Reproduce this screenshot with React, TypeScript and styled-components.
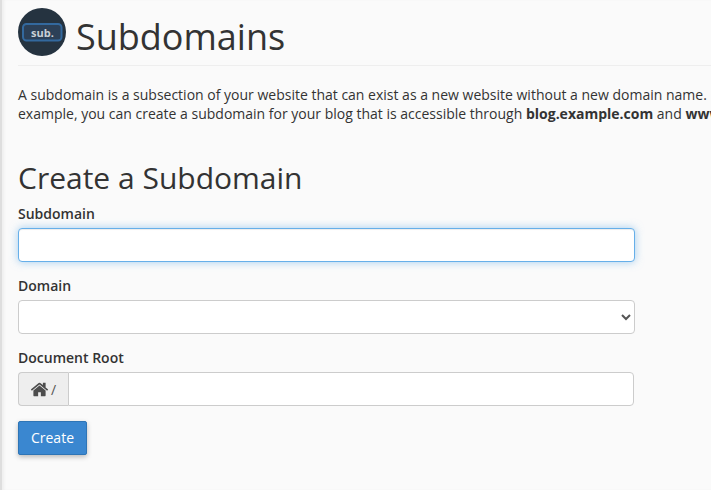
import React from "react";
import styled, { createGlobalStyle } from "styled-components";

const GlobalStyle = createGlobalStyle`
  html, body {
    margin: 0;
    padding: 0;
    height: 100%;
    overflow: hidden;
    background-color: #fafafa;
  }
  #root {
    height: 100%;
  }
`;

const Page = styled.div`
  box-sizing: border-box;
  width: 711px;
  height: 490px;
  overflow: hidden;
  padding: 8px 0 0 16px;
  background-color: #fafafa;
  color: #333;
  font-family: "Open Sans", sans-serif;
  font-size: 14px;
  border-left: 2px solid #dedede;
  box-shadow: inset 3px 0 3px -1px #eeeeee;
`;

const Header = styled.div`
  display: flex;
  align-items: center;
  width: 760px;
  height: 48px;
  padding-bottom: 9px;
  border-bottom: 1px solid #eee;
`;

const Logo = styled.svg`
  width: 48px;
  height: 48px;
  flex: none;
`;

const Title = styled.h1`
  margin: 10px 0 0 10px;
  font-size: 36px;
  font-weight: 400;
  line-height: 48px;
  color: #333;
`;

const Intro = styled.p`
  margin: 19px 0 0;
  line-height: 19px;
  font-size: 14px;
  white-space: nowrap;
`;

const SectionTitle = styled.h2`
  margin: 37px 0 0;
  font-size: 30px;
  font-weight: 400;
  line-height: 36px;
`;

const Form = styled.form`
  width: 617px;
  padding-top: 8px;
`;

const Field = styled.div`
  margin-bottom: ${(props: { $last?: boolean }) => (props.$last ? "15px" : "14px")};
`;

const Label = styled.label`
  display: block;
  height: 20px;
  margin-bottom: 4px;
  font-size: 14px;
  font-weight: 600;
  line-height: 20px;
`;

const TextInput = styled.input`
  display: block;
  box-sizing: border-box;
  width: 100%;
  height: 34px;
  padding: 6px 12px;
  border: 1px solid #66afe9;
  border-radius: 4px;
  outline: none;
  background: #fff;
  box-shadow: inset 0 1px 1px rgba(0, 0, 0, 0.075), 0 0 8px rgba(102, 175, 233, 0.6);
  font: inherit;
`;

const SelectInput = styled.select`
  display: block;
  box-sizing: border-box;
  width: 100%;
  height: 34px;
  padding: 6px 12px;
  border: 1px solid #ccc;
  border-radius: 4px;
  background: #fff;
  color: #555;
  font: inherit;
`;

const InputGroup = styled.div`
  display: flex;
  width: 616px;
  height: 34px;
`;

const Addon = styled.span`
  display: flex;
  align-items: center;
  gap: 2px;
  box-sizing: border-box;
  width: 50px;
  padding-left: 11px;
  border: 1px solid #ccc;
  border-right: 0;
  border-radius: 4px 0 0 4px;
  background: #eee;
  color: #555;
`;

const HomeIcon = styled.svg`
  width: 19px;
  height: 19px;
  flex: none;
  fill: #4d4d4d;
`;

const GroupInput = styled.input`
  flex: 1;
  min-width: 0;
  box-sizing: border-box;
  padding: 6px 12px;
  border: 1px solid #ccc;
  border-radius: 0 4px 4px 0;
  outline: none;
  background: #fff;
  font: inherit;
`;

const CreateButton = styled.button`
  display: block;
  box-sizing: border-box;
  width: 69px;
  height: 34px;
  padding: 0 0 2px;
  border: 1px solid #2e75b6;
  border-radius: 2px;
  background: #3a87d0;
  box-shadow: 0 2px 5px rgba(0, 0, 0, 0.26);
  color: #fff;
  font: inherit;
`;

export default function App() {
  return (
    <Page>
      <GlobalStyle />
      <Header>
        <Logo viewBox="0 0 48 48">
          <circle cx="24" cy="24" r="24" fill="#253340" />
          <rect x="5" y="16" width="38.5" height="16.5" rx="3.5" fill="#2c4057" stroke="#33699e" strokeWidth="2" />
          <text x="24.5" y="28.5" textAnchor="middle" fontFamily="Open Sans, sans-serif" fontSize="11" fontWeight="700" fill="#c9d0d6">
            sub.
          </text>
        </Logo>
        <Title>Subdomains</Title>
      </Header>
      <Intro>
        A subdomain is a subsection of your website that can exist as a new website without a new domain name. For
        <br />
        example, you can create a subdomain for your blog that is accessible through <b>blog.example.com</b> and{" "}
        <b>www.blog.example.com</b>.
      </Intro>
      <SectionTitle>Create a Subdomain</SectionTitle>
      <Form onSubmit={(e) => e.preventDefault()}>
        <Field>
          <Label htmlFor="subdomain">Subdomain</Label>
          <TextInput id="subdomain" type="text" />
        </Field>
        <Field>
          <Label htmlFor="domain">Domain</Label>
          <SelectInput id="domain" />
        </Field>
        <Field $last>
          <Label htmlFor="root-dir">Document Root</Label>
          <InputGroup>
            <Addon>
              <HomeIcon viewBox="0 0 1792 1792">
                <path d="M1472 992v480q0 26-19 45t-45 19h-384v-384h-256v384h-384q-26 0-45-19t-19-45v-480q0-1 .5-3t.5-3l575-474 575 474q1 2 1 6zm223-69l-62 74q-8 9-21 11h-3q-13 0-21-7l-692-577-692 577q-12 8-24 7-13-2-21-11l-62-74q-8-10-7-23.5t11-21.5l719-599q32-26 76-26t76 26l244 204v-195q0-14 9-23t23-9h192q14 0 23 9t9 23v408l219 182q10 8 11 21.5t-7 23.5z" />
              </HomeIcon>
              /
            </Addon>
            <GroupInput id="root-dir" type="text" />
          </InputGroup>
        </Field>
        <CreateButton type="submit">Create</CreateButton>
      </Form>
    </Page>
  );
}
